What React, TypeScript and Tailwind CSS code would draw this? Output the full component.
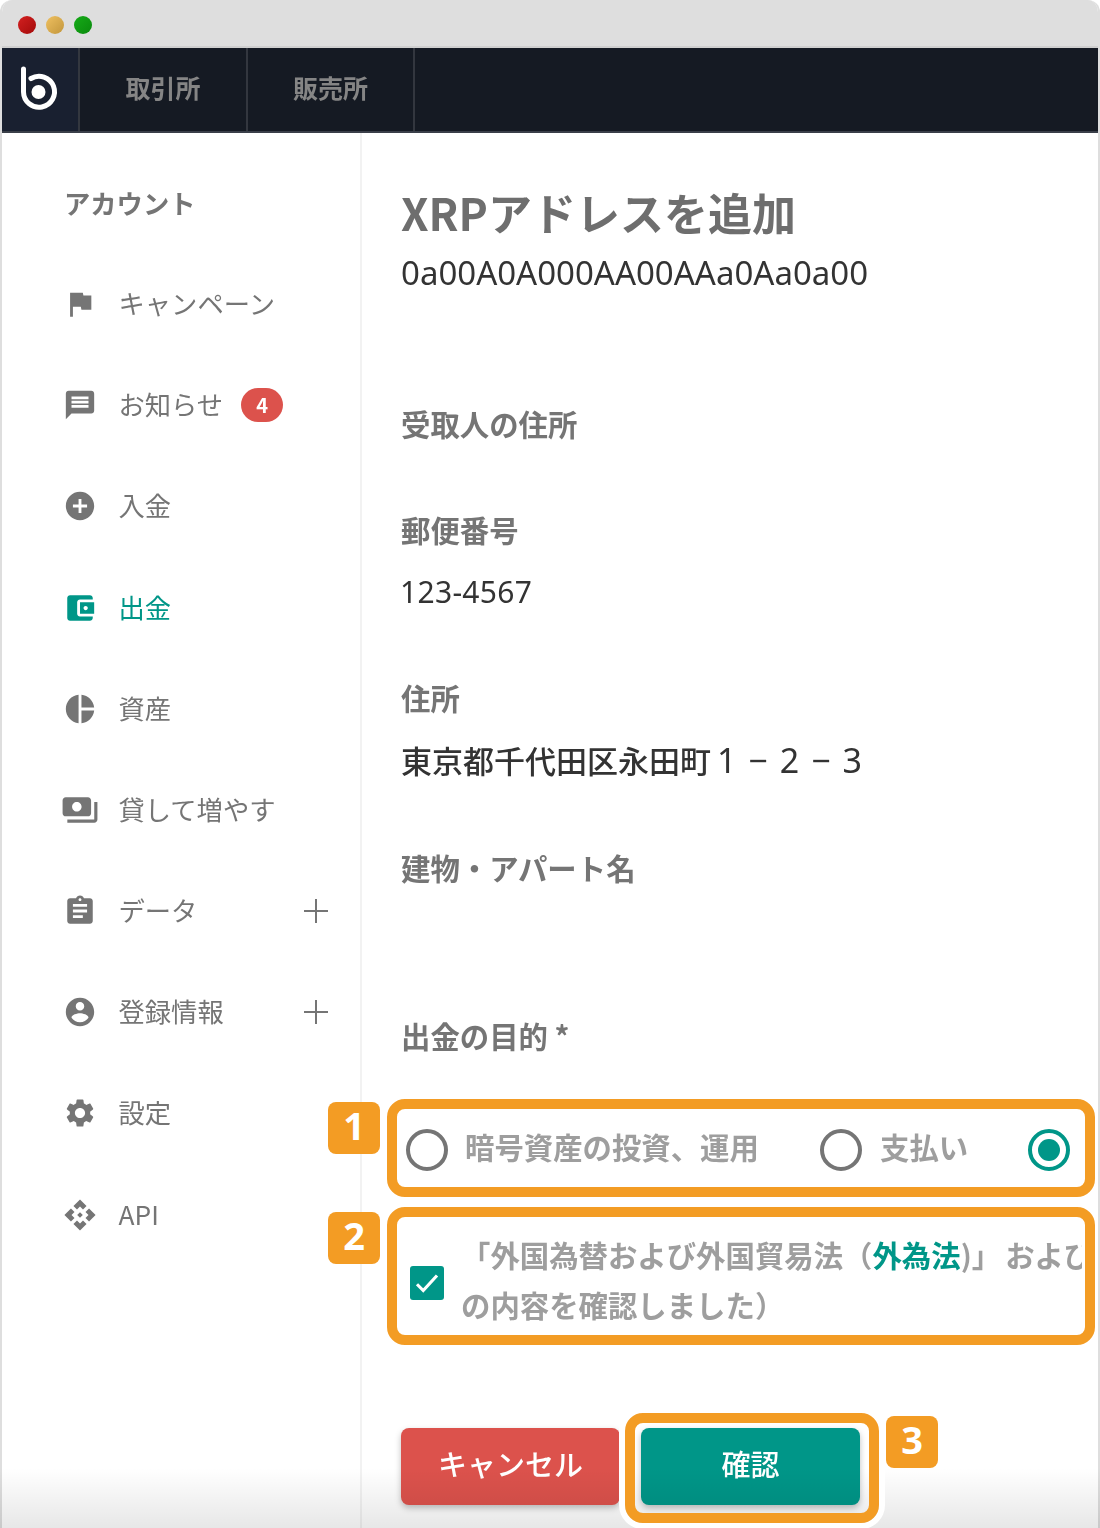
import React from "react";

const FONT = "font-['Noto_Sans_CJK_JP','Noto_Sans',sans-serif]";

const Icon = ({ d, className = "" }: { d: string; className?: string }) => (
  <svg viewBox="0 0 24 24" className={className} fill="currentColor" aria-hidden="true">
    <path d={d} />
  </svg>
);

const icons = {
  flag: "M14.4 6L14 4H5v17h2v-7h5.6l.4 2h7V6z",
  message:
    "M20 2H4c-1.1 0-1.99.9-1.99 2L2 22l4-4h14c1.1 0 2-.9 2-2V4c0-1.1-.9-2-2-2zm-2 12H6v-2h12v2zm0-3H6V9h12v2zm0-3H6V6h12v2z",
  add: "M12 2C6.48 2 2 6.48 2 12s4.48 10 10 10 10-4.48 10-10S17.52 2 12 2zm5 11h-4v4h-2v-4H7v-2h4V7h2v4h4v2z",
  wallet:
    "M21 18v1c0 1.1-.9 2-2 2H5c-1.11 0-2-.9-2-2V5c0-1.1.89-2 2-2h14c1.1 0 2 .9 2 2v1h-9c-1.11 0-2 .9-2 2v8c0 1.1.89 2 2 2h9zm-9-2h10V8H12v8zm4-2.5c-.83 0-1.5-.67-1.5-1.5s.67-1.5 1.5-1.5 1.5.67 1.5 1.5-.67 1.5-1.5 1.5z",
  pie: "M11 2v20c-5.07-.5-9-4.79-9-10s3.93-9.5 9-10zm2.03 0v8.99H22c-.47-4.74-4.24-8.52-8.97-8.99zm0 11.01V22c4.74-.47 8.5-4.25 8.97-8.99h-8.97z",
  payments:
    "M19 14V6c0-1.1-.9-2-2-2H3c-1.1 0-2 .9-2 2v8c0 1.1.9 2 2 2h14c1.1 0 2-.9 2-2zm-9-1c-1.66 0-3-1.34-3-3s1.34-3 3-3 3 1.34 3 3-1.34 3-3 3zm13-6v11c0 1.1-.9 2-2 2H4v-2h17V7h2z",
  assignment:
    "M19 3h-4.18C14.4 1.84 13.3 1 12 1c-1.3 0-2.4.84-2.82 2H5c-1.1 0-2 .9-2 2v14c0 1.1.9 2 2 2h14c1.1 0 2-.9 2-2V5c0-1.1-.9-2-2-2zm-7 0c.55 0 1 .45 1 1s-.45 1-1 1-1-.45-1-1 .45-1 1-1zm2 14H7v-2h7v2zm3-4H7v-2h10v2zm0-4H7V7h10v2z",
  account:
    "M12 2C6.48 2 2 6.48 2 12s4.48 10 10 10 10-4.48 10-10S17.52 2 12 2zm0 3c1.66 0 3 1.34 3 3s-1.34 3-3 3-3-1.34-3-3 1.34-3 3-3zm0 14.2c-2.5 0-4.71-1.28-6-3.22.03-1.99 4-3.08 6-3.08 1.99 0 5.97 1.09 6 3.08-1.29 1.94-3.5 3.22-6 3.22z",
  settings:
    "M19.14 12.94c.04-.3.06-.61.06-.94 0-.32-.02-.64-.07-.94l2.03-1.58c.18-.14.23-.41.12-.61l-1.92-3.32c-.12-.22-.37-.29-.59-.22l-2.39.96c-.5-.38-1.03-.7-1.62-.94l-.36-2.54c-.04-.24-.24-.41-.48-.41h-3.84c-.24 0-.43.17-.47.41l-.36 2.54c-.59.24-1.13.57-1.62.94l-2.39-.96c-.22-.08-.47 0-.59.22L2.74 8.87c-.12.21-.08.47.12.61l2.03 1.58c-.05.3-.09.63-.09.94s.02.64.07.94l-2.03 1.58c-.18.14-.23.41-.12.61l1.92 3.32c.12.22.37.29.59.22l2.39-.96c.5.38 1.03.7 1.62.94l.36 2.54c.05.24.24.41.48.41h3.84c.24 0 .44-.17.47-.41l.36-2.54c.59-.24 1.13-.56 1.62-.94l2.39.96c.22.08.47 0 .59-.22l1.92-3.32c.12-.22.07-.47-.12-.61l-2.01-1.58zM12 15.6c-1.98 0-3.6-1.62-3.6-3.6s1.62-3.6 3.6-3.6 3.6 1.62 3.6 3.6-1.62 3.6-3.6 3.6z",
  api: "M14 12l-2 2-2-2 2-2 2 2zm-2-6l2.12 2.12 2.5-2.5L12 1 7.38 5.62l2.5 2.5L12 6zm-6 6l2.12-2.12-2.5-2.5L1 12l4.62 4.62 2.5-2.5L6 12zm12 0l-2.12 2.12 2.5 2.5L23 12l-4.62-4.62-2.5 2.5L18 12zm-6 6l-2.12-2.12-2.5 2.5L12 23l4.62-4.62-2.5-2.5L12 18z",
};

const PlusMark = () => (
  <svg viewBox="0 0 24 24" className="ml-auto h-6 w-6 text-[#757575]" fill="none" stroke="currentColor" strokeWidth="2" aria-hidden="true">
    <path d="M12 0v24M0 12h24" />
  </svg>
);

const Item = ({
  icon,
  label,
  active,
  badge,
  plus,
  big,
}: {
  icon: string;
  label: string;
  active?: boolean;
  badge?: string;
  plus?: boolean;
  big?: boolean;
}) => (
  <div className={`flex h-[101.2px] items-center pl-[62px] pr-[32px] ${active ? "text-[#009688]" : "text-[#757575]"}`}>
    <div className="flex w-[32px] justify-center">
      <Icon d={icon} className={big ? "h-[38px] w-[38px] shrink-0" : "h-[34px] w-[34px] shrink-0"} />
    </div>
    <span className="-mt-[2px] ml-[22.5px] text-[26.3px] leading-[38px]">{label}</span>
    {badge && (
      <span className="ml-[18px] flex h-[34px] w-[42px] items-center justify-center rounded-full bg-[#dc524c] text-[20px] font-bold leading-none text-white">
        {badge}
      </span>
    )}
    {plus && <PlusMark />}
  </div>
);

const Label = ({ className, children }: { className: string; children: React.ReactNode }) => (
  <div className={`text-[29.4px] font-bold leading-[40px] text-[#757575] ${className}`}>{children}</div>
);

const Value = ({ className, children }: { className: string; children: React.ReactNode }) => (
  <div className={`leading-[40px] text-[#333333] ${className}`}>{children}</div>
);

const Cell = ({ children }: { children: React.ReactNode }) => (
  <span className="inline-block w-[31.4px] text-center text-[34px] leading-[40px] font-normal font-['Noto_Sans',sans-serif]">{children}</span>
);

const Radio = ({ checked }: { checked?: boolean }) => (
  <span
    className={`flex h-[42px] w-[42px] shrink-0 items-center justify-center rounded-full border-[4px] ${
      checked ? "border-[#009688]" : "border-[#757575]"
    }`}
  >
    {checked && <span className="h-[22px] w-[22px] rounded-full bg-[#009688]" />}
  </span>
);

const Step = ({ n, className }: { n: string; className: string }) => (
  <div
    className={`absolute flex h-[52px] w-[52px] items-center justify-center rounded-[8px] bg-[#f39c24] pb-[6px] text-[38px] font-bold leading-none text-white font-['Noto_Sans',sans-serif] ${className}`}
  >
    {n}
  </div>
);

export default function App() {
  return (
    <div className={`relative h-[1528px] w-[1100px] overflow-hidden bg-white ${FONT}`}>
      <div className="flex h-full flex-col overflow-hidden rounded-t-[12px] border-x-2 border-[#dedede]">
        {/* Title bar */}
        <div className="flex h-[48px] shrink-0 items-center gap-[10px] border-b-2 border-[#cfcfcf] bg-[#dedede] pl-[16px] pt-[4px]">
          <span className="h-[18px] w-[18px] rounded-full bg-gradient-to-br from-[#d42020] to-[#a30a0a]" />
          <span className="h-[18px] w-[18px] rounded-full bg-gradient-to-br from-[#efc060] to-[#c2963c]" />
          <span className="h-[18px] w-[18px] rounded-full bg-gradient-to-br from-[#16ab18] to-[#0a8a0d]" />
        </div>

        {/* Nav */}
        <div className="flex h-[85px] shrink-0 border-b-2 border-[#3a3f49] bg-[#151a23] blur-[0.5px]">
          <div className="flex w-[78px] items-center justify-center border-r-2 border-[#33373f] bg-[#192030]">
            <svg viewBox="0 0 76 85" className="h-[85px] w-[76px]" fill="none" aria-hidden="true">
              <path d="M21.5 22V45A15.5 15.5 0 1 0 29 31.5" stroke="#ffffff" strokeWidth="5" strokeLinecap="round" />
              <circle cx="36.5" cy="45" r="7" fill="#ffffff" />
            </svg>
          </div>
          <div className="flex w-[168px] items-center justify-center border-r-2 border-[#33373f] pb-[4px] text-[25px] font-bold text-[#858585]">
            取引所
          </div>
          <div className="flex w-[167px] items-center justify-center border-r-2 border-[#33373f] pb-[4px] text-[25px] font-bold text-[#858585]">
            販売所
          </div>
        </div>

        <div className="flex min-h-0 flex-1">
          {/* Sidebar */}
          <aside className="w-[360px] shrink-0 border-r-2 border-[#f2f2f2] blur-[0.5px]">
            <div className="pb-[31.4px] pl-[62px] pt-[51px] text-[26.3px] font-bold leading-[38px] text-[#757575]">アカウント</div>
            <Item icon={icons.flag} label="キャンペーン" />
            <Item icon={icons.message} label="お知らせ" badge="4" />
            <Item icon={icons.add} label="入金" />
            <Item icon={icons.wallet} label="出金" active />
            <Item icon={icons.pie} label="資産" />
            <Item icon={icons.payments} label="貸して増やす" big />
            <Item icon={icons.assignment} label="データ" plus />
            <Item icon={icons.account} label="登録情報" plus />
            <Item icon={icons.settings} label="設定" />
            <Item icon={icons.api} label="API" />
          </aside>

          {/* Main */}
          <main className="min-w-0 flex-1 pl-[39px] blur-[0.5px]">
            <h1 className="mt-[54px] text-[44px] font-bold leading-[50px] text-[#6e6e6e]">XRPアドレスを追加</h1>
            <Value className="mt-[16px] text-[33px] font-['Noto_Sans',sans-serif]">0a00A0A000AA00AAa0Aa0a00</Value>
            <Label className="mt-[110px]">受取人の住所</Label>
            <Label className="mt-[66px]">郵便番号</Label>
            <Value className="mt-[23px] -ml-[1px] text-[30px] tracking-[0.3px] font-['Noto_Sans',sans-serif]">123-4567</Value>
            <Label className="mt-[65px]">住所</Label>
            <Value className="mt-[23px] h-[40px] whitespace-nowrap text-[31px] font-medium">
              東京都千代田区永田町
              <Cell>1</Cell>
              <Cell>−</Cell>
              <Cell>2</Cell>
              <Cell>−</Cell>
              <Cell>3</Cell>
            </Value>
            <Label className="mt-[67px]">建物・アパート名</Label>
            <Label className="mt-[128px]">出金の目的 *</Label>

            <div className="mt-[70px] flex h-[50px] items-center pl-[5px] text-[29.4px] font-bold text-[#9e9e9e]">
              <Radio />
              <span className="-mt-[8px] ml-[17px] w-[355px] whitespace-nowrap">暗号資産の投資、運用</span>
              <Radio />
              <span className="-mt-[8px] ml-[18px] w-[148px] whitespace-nowrap">支払い</span>
              <Radio checked />
            </div>

            <div className="mt-[57px] flex h-[100px] items-center pl-[9px] text-[29.4px] font-bold leading-[50px] text-[#9e9e9e]">
              <span className="mt-[2px] flex h-[34px] w-[34px] shrink-0 items-center justify-center rounded-[3px] bg-[#009688] text-white">
                <svg viewBox="0 0 24 24" className="h-[30px] w-[30px]" fill="none" stroke="currentColor" strokeWidth="2.5" aria-hidden="true">
                  <path d="M4 13l5 5L20 6" />
                </svg>
              </span>
              <div className="-mt-[6px] ml-[17px] w-[621px] overflow-hidden whitespace-nowrap">
                <div>
                  「外国為替および外国貿易法（<span className="text-[#009688]">外為法</span>)<span className="mr-[4px]">」</span>および外国
                </div>
                <div>の内容を確認しました）</div>
              </div>
            </div>

            <div className="mt-[96px] flex gap-[21px]">
              <button className="flex h-[77px] w-[219px] items-center justify-center rounded-[8px] bg-[#dc524c] pb-[6px] text-[29px] font-medium text-white shadow-[0_3px_6px_rgba(0,0,0,0.25)]">
                キャンセル
              </button>
              <button className="flex h-[77px] w-[219px] items-center justify-center rounded-[8px] bg-[#009688] pb-[6px] text-[29px] font-medium text-white shadow-[0_3px_6px_rgba(0,0,0,0.25)]">
                確認
              </button>
            </div>
          </main>
        </div>
      </div>

      {/* Bottom fade */}
      <div className="pointer-events-none absolute inset-x-0 bottom-0 h-[60px] bg-gradient-to-b from-transparent to-[#00000018]" />

      {/* Annotations */}
      <div className="absolute left-[387px] top-[1099px] h-[98px] w-[708px] rounded-[18px] border-[10px] border-[#f39c24]" />
      <div className="absolute left-[387px] top-[1207px] h-[138px] w-[708px] rounded-[18px] border-[10px] border-[#f39c24]" />
      <div className="absolute left-[625px] top-[1413px] h-[110px] w-[254px] rounded-[18px] border-[10px] border-[#f39c24] shadow-[0_0_0_6px_#ffffff]" />
      <Step n="1" className="left-[328px] top-[1102px]" />
      <Step n="2" className="left-[328px] top-[1212px]" />
      <Step n="3" className="left-[886px] top-[1416px]" />
    </div>
  );
}
